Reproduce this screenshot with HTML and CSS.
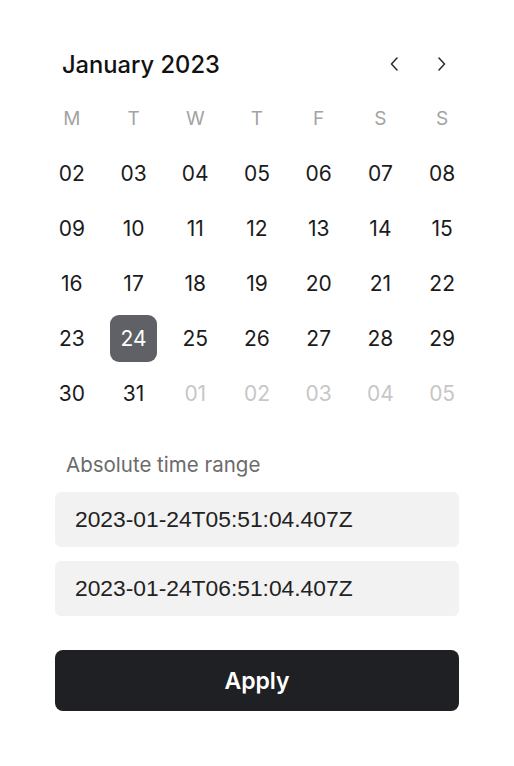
FILE: index.html
```html
<!DOCTYPE html>
<html lang="en">
<head>
<meta charset="utf-8">
<link rel="stylesheet" href="styles.css">
</head>
<body>
<div class="picker">
  <div class="header">
    <div class="title">January 2023</div>
    <div class="nav">
      <button class="nav-btn" aria-label="Previous month">
        <svg width="10" height="14" viewBox="0 0 10 14"><path d="M8 1 L2.5 7 L8 13" fill="none" stroke="#2a2a2a" stroke-width="1.5" stroke-linecap="round" stroke-linejoin="round"/></svg>
      </button>
      <button class="nav-btn" aria-label="Next month">
        <svg width="10" height="14" viewBox="0 0 10 14"><path d="M2 1 L7.5 7 L2 13" fill="none" stroke="#2a2a2a" stroke-width="1.5" stroke-linecap="round" stroke-linejoin="round"/></svg>
      </button>
    </div>
  </div>
  <div class="grid">
    <div class="wd">M</div><div class="wd">T</div><div class="wd">W</div><div class="wd">T</div><div class="wd">F</div><div class="wd">S</div><div class="wd">S</div>
    <div class="day"><span>02</span></div><div class="day"><span>03</span></div><div class="day"><span>04</span></div><div class="day"><span>05</span></div><div class="day"><span>06</span></div><div class="day"><span>07</span></div><div class="day"><span>08</span></div>
    <div class="day"><span>09</span></div><div class="day"><span>10</span></div><div class="day"><span>11</span></div><div class="day"><span>12</span></div><div class="day"><span>13</span></div><div class="day"><span>14</span></div><div class="day"><span>15</span></div>
    <div class="day"><span>16</span></div><div class="day"><span>17</span></div><div class="day"><span>18</span></div><div class="day"><span>19</span></div><div class="day"><span>20</span></div><div class="day"><span>21</span></div><div class="day"><span>22</span></div>
    <div class="day"><span>23</span></div><div class="day selected"><span>24</span></div><div class="day"><span>25</span></div><div class="day"><span>26</span></div><div class="day"><span>27</span></div><div class="day"><span>28</span></div><div class="day"><span>29</span></div>
    <div class="day"><span>30</span></div><div class="day"><span>31</span></div><div class="day muted"><span>01</span></div><div class="day muted"><span>02</span></div><div class="day muted"><span>03</span></div><div class="day muted"><span>04</span></div><div class="day muted"><span>05</span></div>
  </div>
  <div class="label">Absolute time range</div>
  <div class="field">2023-01-24T05:51:04.407Z</div>
  <div class="field">2023-01-24T06:51:04.407Z</div>
  <button class="apply">Apply</button>
</div>
</body>
</html>
```
FILE: styles.css
```css
html, body {
  margin: 0;
  padding: 0;
  background: #ffffff;
}
body {
  font-family: Inter, "Noto Sans", sans-serif;
  color: #1b1b1b;
}
.picker {
  width: 514px;
  box-sizing: border-box;
  padding: 44px 55px 0 55px;
}
.header {
  display: flex;
  align-items: center;
  justify-content: space-between;
  height: 40px;
  padding-left: 7px;
}
.title {
  font-size: 23.7px;
  font-weight: 500;
  color: #111111;
}
.nav {
  display: flex;
  gap: 24px;
  margin-right: 5px;
}
.nav-btn {
  width: 24px;
  height: 30px;
  padding: 0;
  border: 0;
  background: transparent;
  display: flex;
  align-items: center;
  justify-content: center;
}
.grid {
  display: grid;
  grid-template-columns: repeat(7, 1fr);
  grid-auto-rows: 55px;
  margin: 7px -14px 0 -14px;
}
.wd {
  display: flex;
  align-items: center;
  justify-content: center;
  font-size: 19px;
  color: #a3a3a3;
}
.day {
  display: flex;
  align-items: center;
  justify-content: center;
  font-size: 21px;
  color: #1b1b1b;
}
.day span {
  width: 47px;
  height: 47px;
  display: flex;
  align-items: center;
  justify-content: center;
  border-radius: 9px;
}
.day.selected span {
  background: #5f6166;
  color: #ffffff;
}
.day.muted {
  color: #c7c7c7;
}
.label {
  margin-top: 30px;
  padding-left: 11px;
  font-size: 20.5px;
  color: #6b6b6b;
  height: 28px;
  line-height: 28px;
}
.field {
  margin-top: 13px;
  height: 55px;
  box-sizing: border-box;
  padding-left: 20px;
  display: flex;
  align-items: center;
  background: #f2f2f2;
  border-radius: 6px;
  font-family: "Liberation Sans", Arial, sans-serif;
  font-size: 22.8px;
  color: #222222;
}
.field + .field {
  margin-top: 14px;
}
.apply {
  display: block;
  width: 100%;
  height: 61px;
  margin-top: 34px;
  border: 0;
  border-radius: 8px;
  background: #1f2023;
  color: #ffffff;
  font-family: Inter, "Noto Sans", sans-serif;
  font-size: 23px;
  font-weight: 600;
}
```
